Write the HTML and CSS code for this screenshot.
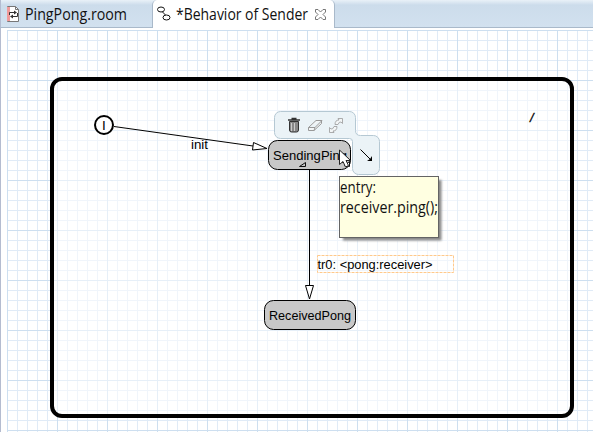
FILE: index.html
```html
<!DOCTYPE html>
<html lang="en">
<head>
<meta charset="utf-8">
<title>Behavior of Sender</title>
<link rel="stylesheet" href="styles.css">
</head>
<body>
<div class="editor">
  <nav class="tabs">
    <div class="tab">
      <svg class="icon-room" width="14" height="16" viewBox="0 0 14 16">
        <path d="M1.500.5h8l3 3v12h-11z" fill="#fff" stroke="#777"/>
        <path d="M1 1h3v14H1z" fill="#f29a9a"/>
        <path d="M9.500.5v3h3" fill="none" stroke="#777"/>
        <path d="M3.500 9V6.500H9M11.500 7v3.500H6" fill="none" stroke="#333"/>
        <path d="M8 4.500v4l3-2zM7 8.500v4l-3-2z" fill="#333"/>
      </svg>
      <svg width="106" height="28"><text class="tab-text" x="0" y="20" textLength="102" lengthAdjust="spacingAndGlyphs">PingPong.room</text></svg>
    </div>
    <div class="tab active">
      <svg width="14" height="16" viewBox="0 0 14 16" fill="none" stroke="#111">
        <ellipse cx="4" cy="3.500" rx="3.500" ry="2.500"/><ellipse cx="9.500" cy="11.500" rx="3.500" ry="2.500"/><path d="M5.500 6l3 3"/>
      </svg>
      <svg width="135" height="28"><text class="tab-text" x="1" y="20" textLength="132" lengthAdjust="spacingAndGlyphs">*Behavior of Sender</text></svg>
      <svg width="12" height="11" viewBox="-1 0 12 11" fill="#fff" stroke="#777"><path d="M.5.5h2.500L5.500 3 8 .5h2.500V3L8 5.500 10.500 8v2.500H8L5.500 8 3 10.500H.5V8L3 5.500.5 3z"/></svg>
    </div>
  </nav>
  <main class="canvas">
    <svg class="diagram" width="593" height="404" viewBox="0 28 593 404">
      <rect class="frame" x="52" y="79" width="520" height="337" rx="10"/>
      <text class="label slash" x="530" y="121.500">/</text>

      <circle class="initial" cx="104" cy="125" r="9"/>
      <text class="label" x="102" y="130">I</text>
      <path class="edge" d="M114 126.500L253 146"/>
      <path class="arrow" d="M253.500 142.500L267 148.500 252.500 150z"/>
      <text class="label" x="191" y="149" textLength="17" lengthAdjust="spacingAndGlyphs">init</text>

      <path class="edge" d="M309.500 170V286"/>
      <path class="arrow" d="M305.500 285.500h8L309.500 299z"/>
      <rect class="label-box" x="317.500" y="255.500" width="136" height="17"/>
      <text class="label" x="317.500" y="269" textLength="115" lengthAdjust="spacingAndGlyphs">tr0: &lt;pong:receiver&gt;</text>

      <path class="pad" d="M280.500 111.500h69a6 6 0 0 1 6 6v13q0 5 5 5h13a6 6 0 0 1 6 6v27a6 6 0 0 1-6 6h-15a6 6 0 0 1-6-6v-27q0-3-3-3h-69a6 6 0 0 1-6-6v-15a6 6 0 0 1 6-6z"/>
      <rect class="state" x="268.500" y="140.500" width="82" height="29" rx="9"/>
      <text class="label" x="273" y="160" textLength="74" lengthAdjust="spacingAndGlyphs">SendingPing</text>
      <path d="M299.500 166.500h6v-4z" fill="none" stroke="#111"/>
      <path d="M344.500 165.500l5-4v5z" fill="#fff" stroke="#111"/>
      <rect class="state" x="264.500" y="300.500" width="91" height="29" rx="9"/>
      <text class="label" x="269" y="320" textLength="82" lengthAdjust="spacingAndGlyphs">ReceivedPong</text>

      <g>
        <path d="M289.500 121.500v8.500q0 2 2 2h5q2 0 2-2v-8.500z" fill="#888" stroke="#333"/>
        <path d="M288 120h12M291.500 118.500h5" stroke="#333" stroke-width="1.500"/>
        <path d="M291.500 123v8M294.500 123v8" stroke="#ccc"/>
        <path d="M308.500 127.500l7.500-7h6l-7 7zM308.500 127.500v3h5.500l7.500-7v-3M315 127.500l-1 3" fill="#f3f6f7" stroke="#999"/>
        <path class="refresh" d="M335 124.500q0-4.500 4-4.500l-1-1.500h4.500v5l-1.500-1.500q-2-.5-3 2.500z"/>
        <path class="refresh" d="M337 126.500q0 4.500-4 4.500l1 1.500h-4.500v-5l1.500 1.500q2 .5 3-2.500z"/>
        <path d="M360.500 149.500L371 160" stroke="#000"/>
        <path d="M372 161v-5l-2 3-3 2z"/>
      </g>

      <rect class="shadow" x="343" y="180" width="98.500" height="60.500"/>
      <rect class="tooltip" x="339.500" y="176.500" width="99" height="61"/>
      <text class="tip-text" x="340" y="193" textLength="36" lengthAdjust="spacingAndGlyphs">entry:</text>
      <text class="tip-text" x="340" y="213" textLength="98" lengthAdjust="spacingAndGlyphs">receiver.ping();</text>
      <path class="cursor" d="M339.500 150v14.500l3.500-3 2.500 5.500 3-1.500-2.500-5h4.500z"/>
    </svg>
  </main>
</div>
</body>
</html>
```
FILE: styles.css
```css
* { box-sizing: border-box; }
body { margin: 0; background: #fff; overflow: hidden; }
.editor { width: 593px; height: 432px; display: flex; flex-direction: column; }
.tabs {
  height: 28px;
  display: flex;
  background: linear-gradient(#e9f1f8, #ccdceb 5px, #d2e1ef);
  border-bottom: 1px solid #a9b9ca;
  border-left: 1px solid #b4bcd0;
}
.tab { width: 151px; display: flex; align-items: center; gap: 5px; padding-left: 5px; }
.tab.active {
  width: 183px;
  height: 28px;
  padding-left: 4px;
  gap: 4px;
  background: #fff;
  border: 1px solid #a9b9ca;
  border-width: 0 1px;
  border-radius: 5px 5px 0 0;
}
.tab svg { flex: none; display: block; overflow: visible; }
.tab-text { font: 15.5px "Open Sans", "Noto Sans", sans-serif; fill: #111; }
.canvas {
  flex: 1;
  border-left: 1px solid #b4bcd0;
  background:
    linear-gradient(90deg, #fff 6px, transparent 6px),
    linear-gradient(#fff 2px, transparent 2px),
    linear-gradient(90deg, #cddff0 1px, transparent 1px) 6px 2px / 50px 50px,
    linear-gradient(#cddff0 1px, transparent 1px) 6px 2px / 50px 50px,
    linear-gradient(90deg, #e0ebf7 1px, transparent 1px) 6px 2px / 10px 10px,
    linear-gradient(#e0ebf7 1px, transparent 1px) 6px 2px / 10px 10px;
}
.diagram { display: block; margin-left: -1px; }
.frame { fill: rgba(255, 255, 255, .5); stroke: #000; stroke-width: 4; }
.label { font: 13.5px "Liberation Sans", Arial, sans-serif; fill: #000; }
.slash { font-style: italic; font-size: 13px; stroke: #000; stroke-width: .3; }
.initial { fill: #fff; stroke: #000; stroke-width: 2; }
.edge { stroke: #000; fill: none; }
.arrow { fill: #fff; stroke: #000; }
.label-box { fill: none; stroke: #ffc98b; stroke-dasharray: 3 1; }
.state { fill: #c8c8c8; stroke: #000; }
.pad { fill: #ebf3f7; stroke: #b5c8d3; }
.refresh { fill: #f3f6f7; stroke: #999; stroke-width: .8; }
.shadow { fill: #888; filter: blur(1px); }
.tooltip { fill: #ffffe1; stroke: #646464; }
.tip-text { font: 15.5px "Open Sans", "Noto Sans", sans-serif; fill: #111; }
.cursor { fill: #fff; stroke: #222; }
```
